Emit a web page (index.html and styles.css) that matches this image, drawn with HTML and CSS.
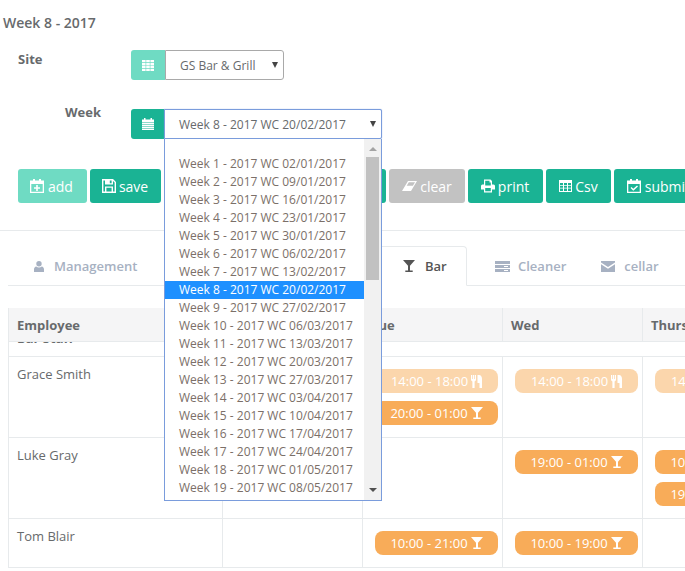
FILE: index.html
```html
<!DOCTYPE html>
<html lang="en">
<head>
<meta charset="utf-8">
<title>Week 8 - 2017</title>
<link rel="stylesheet" href="styles.css">
</head>
<body>
<svg class="sprite" aria-hidden="true">
  <symbol id="i-th" viewBox="0 0 12 11"><path d="M0 0h3.600v2.300H0zM4.200 0h3.600v2.300H4.200zM8.400 0H12v2.300H8.400zM0 2.900h3.600v2.300H0zM4.200 2.900h3.600v2.300H4.200zM8.400 2.900H12v2.300H8.400zM0 5.800h3.600v2.300H0zM4.200 5.800h3.600v2.300H4.200zM8.400 5.800H12v2.300H8.400zM0 8.700h3.600V11H0zM4.200 8.700h3.600V11H4.200zM8.400 8.700H12V11H8.400z"/></symbol>
  <symbol id="i-cal" viewBox="0 0 12 12"><path d="M2 0h1.500v1.500H8.500V0H10v1.500h2V4H0V1.500h2zM0 4.600h12v1.400H0zM0 6.600h12V8H0zM0 8.600h12V10H0zM0 10.600h12V12H0z"/></symbol>
  <symbol id="i-calplus" viewBox="0 0 14 14"><path fill-rule="evenodd" d="M3 0h2v1.500h4V0h2v1.500h3V14H0V1.500h3zM1.300 5v7.700h11.400V5zM6.200 6h1.600v2.200H10v1.600H7.800V12H6.200V9.800H4V8.200h2.200z"/></symbol>
  <symbol id="i-calcheck" viewBox="0 0 14 14"><path fill-rule="evenodd" d="M3 0h2v1.500h4V0h2v1.500h3V14H0V1.500h3zM1.300 5v7.700h11.400V5zM10 6.500l1 1-4.700 4.300L3.500 9l1-1 1.800 1.800z"/></symbol>
  <symbol id="i-save" viewBox="0 0 14 14"><path fill-rule="evenodd" d="M0 0h11l3 3v11H0zM1.400 1.400v11.200h1.600V7.500h8v5.100h1.600V3.600l-1.600-1.600v3.500H3V1.400zM4.400 8.800v3.800h5.200V8.800zM7.800 1.400v2.800h1.800V1.400z"/></symbol>
  <symbol id="i-eraser" viewBox="0 0 15 10"><path fill-rule="evenodd" d="M6 0h9L9 10H0zM6.800 1.200L4.700 4.700h6.200l2.100-3.500z"/></symbol>
  <symbol id="i-print" viewBox="0 0 14 13"><path fill-rule="evenodd" d="M3 0h6.500L11 1.500V5h1.500A1.500 1.500 0 0 1 14 6.500V10h-3v3H3v-3H0V6.500A1.500 1.500 0 0 1 1.500 5H3zM4.200 1.200V6h5.600V3H8.500V1.200zM4.200 8.500v3.300h5.600V8.500z"/></symbol>
  <symbol id="i-table" viewBox="0 0 13 12"><path fill-rule="evenodd" d="M0 0h13v12H0zM1 3v2h3v-2zM5 3v2h3V3zM9 3v2h3V3zM1 5.800v2h3v-2zM5 5.800v2h3v-2zM9 5.800v2h3v-2zM1 8.600V11h3V8.600zM5 8.600V11h3V8.600zM9 8.600V11h3V8.600z"/></symbol>
  <symbol id="i-user" viewBox="0 0 10 11"><circle cx="5" cy="2.700" r="2.700"/><path d="M0 11V8.500C0 6.800 1 5.800 2.200 5.500 3 6.200 4 6.500 5 6.500s2-.3 2.800-1C9 5.800 10 6.800 10 8.500V11z"/></symbol>
  <symbol id="i-glass" viewBox="0 0 12 12"><path d="M0 0h12L7 5.800v4.800h2.700V12H2.300v-1.400H5V5.800z"/></symbol>
  <symbol id="i-cut" viewBox="0 0 11 13"><path d="M0 0h1.200v4h.7V0h1.200v4h.7V0H5v5.200L3.600 6.500V13H1.400V6.500L0 5.200zM6.500 0H8c2 0 3 2 3 4v9H8.500V8h-2z"/></symbol>
  <symbol id="i-server" viewBox="0 0 15 11"><path d="M0 0h15v3H0zM0 4h15v3H0zM0 8h15v3H0z"/><path fill="#fff" d="M9 5h4v1H9zM9 9h4v1H9z"/></symbol>
  <symbol id="i-mail" viewBox="0 0 14 11"><path d="M0 0h14v1.500L7 6 0 1.500zM0 3.200l7 4.500 7-4.500V11H0z"/></symbol>
</svg>

<h1 class="page-title">Week 8 - 2017</h1>

<div class="field field-site">
  <label class="field-label">Site</label>
  <div class="group">
    <span class="addon addon-light"><svg class="ic-th"><use href="#i-th"/></svg></span>
    <div class="select select-site">GS Bar &amp; Grill<i class="caret"></i></div>
  </div>
</div>

<div class="field field-week">
  <label class="field-label">Week</label>
  <div class="group">
    <span class="addon addon-dark"><svg class="ic-12"><use href="#i-cal"/></svg></span>
    <div class="select select-week">Week 8 - 2017 WC 20/02/2017<i class="caret"></i>
      <div class="dropdown">
        <ul class="options">
          <li>Week 1 - 2017 WC 02/01/2017</li>
          <li>Week 2 - 2017 WC 09/01/2017</li>
          <li>Week 3 - 2017 WC 16/01/2017</li>
          <li>Week 4 - 2017 WC 23/01/2017</li>
          <li>Week 5 - 2017 WC 30/01/2017</li>
          <li>Week 6 - 2017 WC 06/02/2017</li>
          <li>Week 7 - 2017 WC 13/02/2017</li>
          <li class="selected">Week 8 - 2017 WC 20/02/2017</li>
          <li>Week 9 - 2017 WC 27/02/2017</li>
          <li>Week 10 - 2017 WC 06/03/2017</li>
          <li>Week 11 - 2017 WC 13/03/2017</li>
          <li>Week 12 - 2017 WC 20/03/2017</li>
          <li>Week 13 - 2017 WC 27/03/2017</li>
          <li>Week 14 - 2017 WC 03/04/2017</li>
          <li>Week 15 - 2017 WC 10/04/2017</li>
          <li>Week 16 - 2017 WC 17/04/2017</li>
          <li>Week 17 - 2017 WC 24/04/2017</li>
          <li>Week 18 - 2017 WC 01/05/2017</li>
          <li>Week 19 - 2017 WC 08/05/2017</li>
        </ul>
        <div class="scrollbar">
          <i class="arrow-up"></i>
          <div class="thumb"></div>
          <i class="arrow-down"></i>
        </div>
      </div>
    </div>
  </div>
</div>

<div class="toolbar">
  <button class="btn btn-faded"><svg class="ic-14"><use href="#i-calplus"/></svg>add</button>
  <button class="btn btn-save"><svg class="ic-14"><use href="#i-save"/></svg>save</button>
  <button class="btn btn-hidden">copy</button>
  <button class="btn btn-grey"><svg class="ic-15"><use href="#i-eraser"/></svg>clear</button>
  <button class="btn btn-print"><svg class="ic-14"><use href="#i-print"/></svg>print</button>
  <button class="btn"><svg class="ic-13"><use href="#i-table"/></svg>Csv</button>
  <button class="btn btn-submit"><svg class="ic-14"><use href="#i-calcheck"/></svg>submit</button>
</div>

<hr class="divider">

<ul class="tabs">
  <li class="tab tab-mgmt"><svg class="ic-user"><use href="#i-user"/></svg>Management</li>
  <li class="tab tab-hidden">Kitchen</li>
  <li class="tab tab-active"><svg class="ic-glass"><use href="#i-glass"/></svg>Bar</li>
  <li class="tab tab-cleaner"><svg class="ic-server"><use href="#i-server"/></svg>Cleaner</li>
  <li class="tab tab-cellar"><svg class="ic-mail"><use href="#i-mail"/></svg>cellar</li>
</ul>

<div class="rota">
  <div class="row row-head">
    <div class="cell">Employee</div>
    <div class="cell">Mon</div>
    <div class="cell">Tue</div>
    <div class="cell">Wed</div>
    <div class="cell">Thurs</div>
  </div>
  <div class="row-group"><span class="group-name">Bar Staff</span></div>
  <div class="row">
    <div class="cell cell-name">Grace Smith</div>
    <div class="cell"></div>
    <div class="cell cell-shifts">
      <span class="pill pill-light">14:00 - 18:00<svg class="ic-cut"><use href="#i-cut"/></svg></span>
      <span class="pill">20:00 - 01:00<svg class="ic-pill"><use href="#i-glass"/></svg></span>
    </div>
    <div class="cell cell-shifts">
      <span class="pill pill-light">14:00 - 18:00<svg class="ic-cut"><use href="#i-cut"/></svg></span>
    </div>
    <div class="cell cell-shifts">
      <span class="pill pill-light">14:00 - 18:00<svg class="ic-cut"><use href="#i-cut"/></svg></span>
    </div>
  </div>
  <div class="row">
    <div class="cell cell-name">Luke Gray</div>
    <div class="cell"></div>
    <div class="cell"></div>
    <div class="cell cell-shifts">
      <span class="pill">19:00 - 01:00<svg class="ic-pill"><use href="#i-glass"/></svg></span>
    </div>
    <div class="cell cell-shifts">
      <span class="pill">10:00 - 18:00<svg class="ic-pill"><use href="#i-glass"/></svg></span>
      <span class="pill">19:00 - 01:00<svg class="ic-pill"><use href="#i-glass"/></svg></span>
    </div>
  </div>
  <div class="row row-short">
    <div class="cell cell-name">Tom Blair</div>
    <div class="cell"></div>
    <div class="cell cell-shifts">
      <span class="pill">10:00 - 21:00<svg class="ic-pill"><use href="#i-glass"/></svg></span>
    </div>
    <div class="cell cell-shifts">
      <span class="pill">10:00 - 19:00<svg class="ic-pill"><use href="#i-glass"/></svg></span>
    </div>
    <div class="cell"></div>
  </div>
</div>
</body>
</html>
```

FILE: styles.css
```css
* { box-sizing: border-box; }
html, body { margin: 0; height: 571px; overflow: hidden; }
body {
  width: 685px;
  background: #fff;
  color: #676a6c;
  font-family: "Open Sans", "Liberation Sans", sans-serif;
  font-size: 13px;
}
svg { fill: currentColor; display: block; flex: none; }
.sprite { display: none; }

.page-title {
  margin: 0;
  padding: 13px 0 0 3px;
  height: 50px;
  font-size: 14px;
  line-height: 19px;
  font-weight: 600;
}

.field { display: flex; }
.field-site { padding-left: 18px; height: 59px; }
.field-week { padding-left: 65px; height: 60px; }
.field-label { font-weight: 700; line-height: 18px; }
.field-site .field-label { width: 113px; }
.field-week .field-label { width: 66px; margin-top: -6px; }
.group { display: flex; height: 30px; }
.addon {
  width: 34px;
  display: flex;
  align-items: center;
  justify-content: center;
  color: #fff;
  border-radius: 3px 0 0 3px;
}
.addon-light { background: #6fdbc3; }
.addon-dark { background: #1ab394; width: 33px; }
.ic-12 { width: 12px; height: 12px; }
.ic-th { width: 12px; height: 11px; }

.select {
  position: relative;
  height: 30px;
  border: 1px solid #a9a9a9;
  border-radius: 0 3px 3px 0;
  font-size: 12px;
  line-height: 30px;
  padding-left: 14px;
  background: #fff;
}
.select-site { width: 119px; }
.select-week { width: 218px; border-color: #7a9cdc; border-radius: 0 2px 2px 0; box-shadow: 0 0 1px #7a9cdc; }
.caret {
  position: absolute;
  right: 5px;
  top: 11px;
  border-left: 3px solid transparent;
  border-right: 3px solid transparent;
  border-top: 6px solid #444;
}

.dropdown {
  position: absolute;
  z-index: 5;
  left: -1px;
  top: 29px;
  width: 218px;
  height: 362px;
  display: flex;
  background: #fff;
  border: 1px solid #7a9cdc;
  border-top-width: 0;
  line-height: 18px;
}
.options {
  flex: 1;
  margin: 0;
  padding: 16px 0 0;
  list-style: none;
  color: #7b6f68;
}
.options li { padding-left: 14px; height: 18px; }
.options .selected { background: #1e90ff; color: #fff; }
.scrollbar {
  width: 17px;
  background: #f1f1f1;
  position: relative;
  display: flex;
  flex-direction: column;
  align-items: center;
  padding-top: 18px;
}
.thumb { width: 13px; height: 123px; background: #c1c1c1; }
.arrow-up, .arrow-down {
  position: absolute;
  border-left: 4px solid transparent;
  border-right: 4px solid transparent;
}
.arrow-up { top: 8px; border-bottom: 4px solid #a3a3a3; }
.arrow-down { bottom: 8px; border-top: 4px solid #505050; }

.toolbar { display: flex; gap: 3px; height: 34px; padding-left: 18px; }
.btn {
  flex: none;
  display: flex;
  align-items: center;
  gap: 3px;
  height: 34px;
  border: 0;
  border-radius: 3px;
  padding: 0 13px;
  background: #1ab394;
  color: #fff;
  font: 400 14px "Open Sans", "Liberation Sans", sans-serif;
}
.btn-faded { background: #6fdbc3; padding: 0 14px 0 12px; gap: 4px; }
.btn-save { padding: 0 13px 0 12px; }
.btn-print { padding-right: 14px; }
.btn-submit { gap: 4px; }
.btn-hidden { width: 222px; }
.btn-grey { background: #c2c2c2; }
.ic-13 { width: 13px; height: 12px; }
.ic-14 { width: 14px; height: 14px; }
.ic-15 { width: 15px; height: 10px; }

.divider { margin: 27px 0 15px; border: 0; border-top: 1px solid #e7eaec; }

.tabs {
  display: flex;
  margin: 0 0 22px 8px;
  padding: 0;
  list-style: none;
  height: 40px;
  border-bottom: 1px solid #e7eaec;
  font-weight: 600;
  color: #a7b1c2;
}
.tab { display: flex; align-items: center; height: 40px; flex: none; padding: 0 20px 0 26px; }
.tab-mgmt { width: 149px; }
.tab-hidden { width: 220px; color: transparent; }
.tab-active {
  width: 90px;
  padding-left: 25px;
  color: #555;
  background: #fff;
  border: 1px solid #e7eaec;
  border-bottom-color: #fff;
  border-radius: 4px 4px 0 0;
}
.tab-cleaner { padding: 0 17px 0 28px; }
.tab-cellar { padding: 0 0 0 18px; }
.ic-user { width: 10px; height: 11px; margin-right: 10px; }
.ic-glass { width: 12px; height: 12px; margin-right: 10px; }
.ic-server { width: 15px; height: 11px; margin-right: 8px; }
.ic-mail { width: 14px; height: 11px; margin-right: 9px; }

.rota { margin-left: 8px; width: 677px; overflow: hidden; }
.row {
  display: grid;
  grid-template-columns: 214px 140px 140px 140px 140px;
  height: 81px;
  border-bottom: 1px solid #e7eaec;
  border-left: 1px solid #e7eaec;
}
.row-short { height: 49px; }
.row-head {
  height: 34px;
  background: #f5f5f6;
  font-weight: 700;
  line-height: 18px;
}
.row-head .cell { padding-top: 8px; }
.row-group {
  height: 15px;
  overflow: hidden;
  border-left: 1px solid #e7eaec;
  border-bottom: 1px solid #e7eaec;
  padding-left: 8px;
}
.group-name { display: block; font-weight: 700; line-height: 18px; margin-top: -13px; }
.cell { border-right: 1px solid #e7eaec; padding: 8px 0 0 8px; line-height: 18px; }
.cell:first-child { width: 214px; }
.cell-shifts {
  display: flex;
  flex-direction: column;
  gap: 8px;
  padding: 12px 0 0 12px;
}
.pill {
  display: flex;
  align-items: center;
  justify-content: center;
  gap: 3px;
  width: 123px;
  height: 24px;
  border-radius: 8px;
  background: #f8ac59;
  color: #fff;
  font-size: 13px;
}
.pill-light { background: #fbd6ac; }
.ic-pill { width: 12px; height: 12px; }
.ic-cut { width: 11px; height: 13px; }
```
